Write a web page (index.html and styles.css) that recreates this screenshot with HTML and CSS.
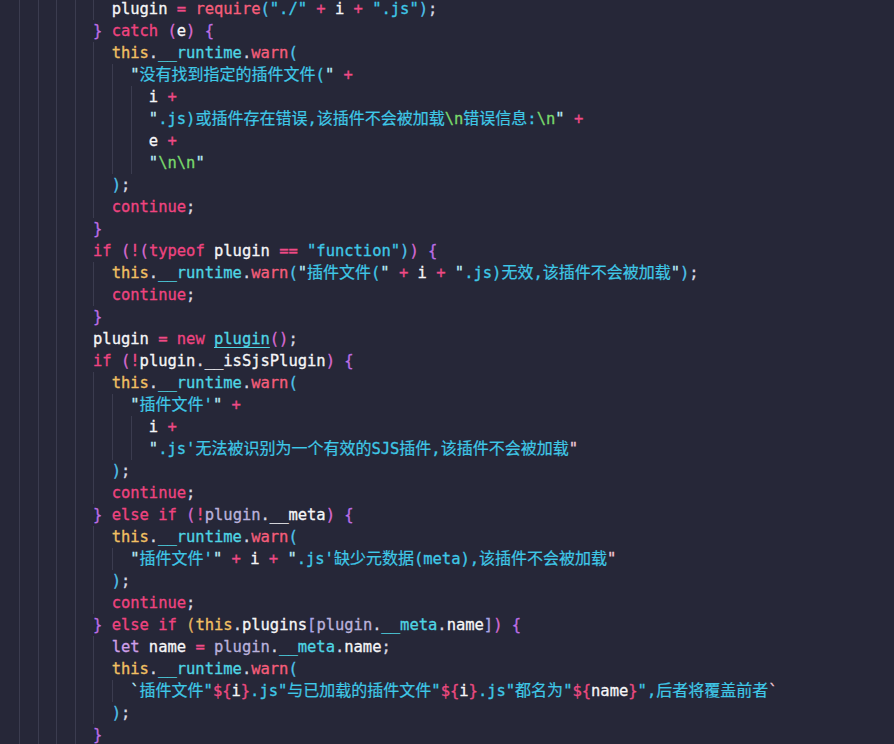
FILE: index.html
```html
<!DOCTYPE html>
<html lang="zh">
<head>
<meta charset="utf-8">
<title>plugin loader</title>
<link rel="stylesheet" href="styles.css">
</head>
<body>
<div class="editor">
<div class="ln i12">            <span class="v">plugin</span> <span class="o">=</span> <span class="f">require</span><span class="bc">(</span><span class="s">"./"</span> <span class="o">+</span> <span class="v">i</span> <span class="o">+</span> <span class="s">".js"</span><span class="bc">)</span><span class="pu">;</span></div>
<div class="ln i10">          <span class="bp">}</span> <span class="k">catch</span> <span class="bm">(</span><span class="v">e</span><span class="bm">)</span> <span class="bp">{</span></div>
<div class="ln i12">            <span class="t">this</span><span class="pu">.</span><span class="p">__runtime</span><span class="pu">.</span><span class="f">warn</span><span class="bc">(</span></div>
<div class="ln i14">              <span class="s"><span class="q">"</span><span class="zh">没有找到指定的插件文件</span>(<span class="q">"</span></span> <span class="o">+</span></div>
<div class="ln i16">                <span class="v">i</span> <span class="o">+</span></div>
<div class="ln i16">                <span class="s"><span class="q">"</span>.js)<span class="zh">或插件存在错误</span>,<span class="zh">该插件不会被加载</span><span class="es">\n</span><span class="zh">错误信息</span>:<span class="es">\n</span><span class="q">"</span></span> <span class="o">+</span></div>
<div class="ln i16">                <span class="v">e</span> <span class="o">+</span></div>
<div class="ln i16">                <span class="s"><span class="q">"</span><span class="es">\n\n</span><span class="q">"</span></span></div>
<div class="ln i12">            <span class="bc">)</span><span class="pu">;</span></div>
<div class="ln i12">            <span class="k">continue</span><span class="pu">;</span></div>
<div class="ln i10">          <span class="bp">}</span></div>
<div class="ln i10">          <span class="k">if</span> <span class="bm">(</span><span class="o">!</span><span class="bm">(</span><span class="k">typeof</span> <span class="v">plugin</span> <span class="o">==</span> <span class="s">"function"</span><span class="bc">)</span><span class="bm">)</span> <span class="bp">{</span></div>
<div class="ln i12">            <span class="t">this</span><span class="pu">.</span><span class="p">__runtime</span><span class="pu">.</span><span class="f">warn</span><span class="bc">(</span><span class="s"><span class="q">"</span><span class="zh">插件文件</span>(<span class="q">"</span></span> <span class="o">+</span> <span class="v">i</span> <span class="o">+</span> <span class="s"><span class="q">"</span>.js)<span class="zh">无效</span>,<span class="zh">该插件不会被加载</span><span class="q">"</span></span><span class="bc">)</span><span class="pu">;</span></div>
<div class="ln i12">            <span class="k">continue</span><span class="pu">;</span></div>
<div class="ln i10">          <span class="bp">}</span></div>
<div class="ln i10">          <span class="v">plugin</span> <span class="o">=</span> <span class="k">new</span> <span class="cl">plugin</span><span class="bm">()</span><span class="pu">;</span></div>
<div class="ln i10">          <span class="k">if</span> <span class="bm">(</span><span class="o">!</span><span class="v">plugin</span><span class="pu">.</span><span class="v">__isSjsPlugin</span><span class="bm">)</span> <span class="bp">{</span></div>
<div class="ln i12">            <span class="t">this</span><span class="pu">.</span><span class="p">__runtime</span><span class="pu">.</span><span class="f">warn</span><span class="bc">(</span></div>
<div class="ln i14">              <span class="s"><span class="q">"</span><span class="zh">插件文件</span>'<span class="q">"</span></span> <span class="o">+</span></div>
<div class="ln i16">                <span class="v">i</span> <span class="o">+</span></div>
<div class="ln i16">                <span class="s"><span class="q">"</span>.js'<span class="zh">无法被识别为一个有效的</span>SJS<span class="zh">插件</span>,<span class="zh">该插件不会被加载</span><span class="qe">"</span></span></div>
<div class="ln i12">            <span class="bc">)</span><span class="pu">;</span></div>
<div class="ln i12">            <span class="k">continue</span><span class="pu">;</span></div>
<div class="ln i10">          <span class="bp">}</span> <span class="k">else</span> <span class="k">if</span> <span class="bm">(</span><span class="o">!</span><span class="vp">plugin</span><span class="pu">.</span><span class="v">__meta</span><span class="bm">)</span> <span class="bp">{</span></div>
<div class="ln i12">            <span class="t">this</span><span class="pu">.</span><span class="p">__runtime</span><span class="pu">.</span><span class="f">warn</span><span class="bc">(</span></div>
<div class="ln i14">              <span class="s"><span class="q">"</span><span class="zh">插件文件</span>'<span class="q">"</span></span> <span class="o">+</span> <span class="v">i</span> <span class="o">+</span> <span class="s"><span class="q">"</span>.js'<span class="zh">缺少元数据</span>(meta),<span class="zh">该插件不会被加载</span><span class="qe">"</span></span></div>
<div class="ln i12">            <span class="bc">)</span><span class="pu">;</span></div>
<div class="ln i12">            <span class="k">continue</span><span class="pu">;</span></div>
<div class="ln i10">          <span class="bp">}</span> <span class="k">else</span> <span class="k">if</span> <span class="bg">(</span><span class="t">this</span><span class="pu">.</span><span class="v">plugins</span><span class="bl">[</span><span class="vp">plugin</span><span class="pu">.</span><span class="p">__meta</span><span class="pu">.</span><span class="v">name</span><span class="bl">]</span><span class="bm">)</span> <span class="bp">{</span></div>
<div class="ln i12">            <span class="kl">let</span> <span class="v">name</span> <span class="o">=</span> <span class="vp">plugin</span><span class="pu">.</span><span class="p">__meta</span><span class="pu">.</span><span class="v">name</span><span class="pu">;</span></div>
<div class="ln i12">            <span class="t">this</span><span class="pu">.</span><span class="p">__runtime</span><span class="pu">.</span><span class="f">warn</span><span class="bc">(</span></div>
<div class="ln i14">              <span class="s"><span class="q">`</span><span class="zh">插件文件</span>"<span class="tp">${</span><span class="v">i</span><span class="tp">}</span>.js"<span class="zh">与已加载的插件文件</span>"<span class="tp">${</span><span class="v">i</span><span class="tp">}</span>.js"<span class="zh">都名为</span>"<span class="tp">${</span><span class="v">name</span><span class="tp">}</span>",<span class="zh">后者将覆盖前者</span><span class="qe">`</span></span></div>
<div class="ln i12">            <span class="bc">)</span><span class="pu">;</span></div>
<div class="ln i10">          <span class="bp">}</span></div>
</div>
</body>
</html>
```

FILE: styles.css
```css
html, body {
  margin: 0;
  padding: 0;
  background: #262738;
}

body {
  width: 894px;
  height: 744px;
  overflow: hidden;
}

.editor {
  margin-top: -2px;
  font-family: "DejaVu Sans Mono", "Noto Sans CJK SC", monospace;
  font-size: 15.5px;
  letter-spacing: -0.03px;
  color: #e6e6ee;
  -webkit-text-stroke: 0.3px currentColor;
}

.ln {
  height: 22px;
  line-height: 22px;
  white-space: pre;
  background-image: repeating-linear-gradient(90deg, #3b3c4f 0 1px, transparent 1px 18.6px);
  background-repeat: no-repeat;
  background-position: 18.6px 0;
}

.i10 { background-size: 74.4px 100%; }
.i12 { background-size: 93px 100%; }
.i14 { background-size: 111.6px 100%; }
.i16 { background-size: 130.2px 100%; }

.zh {
  font-family: "Noto Sans CJK SC", sans-serif;
  font-size: 16px;
  line-height: 16px;
  letter-spacing: 0;
  -webkit-text-stroke: 0.2px currentColor;
}

.k { color: #ef4480; }
.kl { color: #cf9fe8; }
.t { color: #f2c063; }
.v { color: #f5f5f7; }
.vp { color: #bab2dc; }
.p { color: #4fd5e4; }
.f { color: #f65e7b; }
.o { color: #ef4a86; }
.pu { color: #d9d9e2; }
.s { color: #3fc8e7; }
.q { color: #b9ebf5; }
.qe { color: #f0c8d6; }
.es { color: #79d96c; }
.tp { color: #ec4a80; }
.cl {
  color: #4fd5e4;
  text-decoration: underline;
  text-underline-offset: 3px;
}

.bp { color: #bd6ee6; }
.bm { color: #d76ad2; }
.bc { color: #4fc2ea; }
.bl { color: #aaa6e6; }
.bg { color: #e8b55e; }
```
